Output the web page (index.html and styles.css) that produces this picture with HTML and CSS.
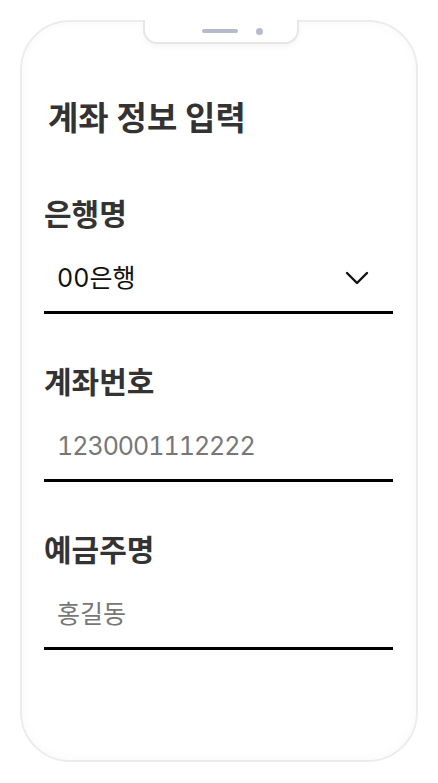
FILE: index.html
```html
<!DOCTYPE html>
<html lang="ko">
<head>
    <meta charset="UTF-8">
    <meta name="viewport" content="width=device-width, initial-scale=1.0">
    <title>계좌 정보 입력</title>
    <link rel="stylesheet" href="styles.css">
</head>
<body>
    <div class="phone">
        <!-- 상단 노치 -->
        <div class="notch">
            <span class="speaker"></span>
            <span class="camera"></span>
        </div>

        <div class="content">
            <h1 class="title">계좌 정보 입력</h1>

            <div class="field">
                <label class="field-label">은행명</label>
                <div class="field-input select">
                    <span class="value">00은행</span>
                    <svg class="chevron" width="24" height="14" viewBox="0 0 24 14">
                        <path d="M2 2 L12 12 L22 2" fill="none" stroke="#111" stroke-width="2.4" stroke-linecap="round" stroke-linejoin="round"/>
                    </svg>
                </div>
            </div>

            <div class="field">
                <label class="field-label">계좌번호</label>
                <div class="field-input">
                    <span class="placeholder number">1230001112222</span>
                </div>
            </div>

            <div class="field">
                <label class="field-label">예금주명</label>
                <div class="field-input">
                    <span class="placeholder">홍길동</span>
                </div>
            </div>
        </div>
    </div>
</body>
</html>
```

FILE: styles.css
```css
body {
    margin: 0;
    padding: 20px;
    background: #fff;
    font-family: 'Inter', 'Noto Sans CJK KR', sans-serif;
    color: #333;
}
.phone {
    position: relative;
    box-sizing: border-box;
    width: 398px;
    height: 742px;
    border: 2px solid #ececec;
    border-radius: 50px;
    box-shadow: inset 0 0 12px rgba(0,0,0,0.03);
}
.notch {
    position: absolute;
    top: -2px;
    left: 121px;
    box-sizing: border-box;
    width: 156px;
    height: 24px;
    background: #fff;
    border: 2px solid #e6e6e6;
    border-top: none;
    border-radius: 0 0 14px 14px;
    box-shadow: 0 3px 6px rgba(0,0,0,0.04);
    display: flex;
    justify-content: center;
    align-items: center;
    gap: 18px;
    padding-left: 22px;
}
.speaker {
    width: 36px;
    height: 4px;
    border-radius: 2px;
    background: #b4bccc;
}
.camera {
    width: 7px;
    height: 7px;
    border-radius: 50%;
    background: #b4bccc;
}
.content {
    padding: 76px 23px 0 22px;
}
.title {
    margin: 0 0 58px 4px;
    font-size: 33px;
    line-height: 40px;
    font-weight: 700;
    color: #333;
}
.field {
    margin-bottom: 50px;
}
.field-label {
    display: block;
    font-size: 30px;
    line-height: 36px;
    font-weight: 700;
    color: #333;
}
.field-input {
    display: flex;
    align-items: center;
    justify-content: space-between;
    padding: 30px 24px 17px 13px;
    border-bottom: 3px solid #000;
    font-size: 25px;
    line-height: 32px;
    font-variant-numeric: tabular-nums;
}
.value {
    color: #111;
}
.placeholder {
    color: #777;
}
.number {
    letter-spacing: -1px;
}
.chevron {
    display: block;
}
```
